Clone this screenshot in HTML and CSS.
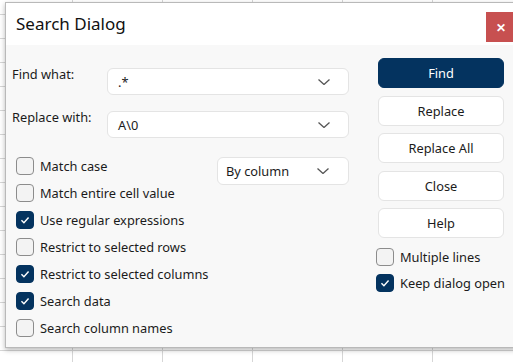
FILE: index.html
```html
<!DOCTYPE html>
<html>
<head>
<meta charset="utf-8">
<link rel="stylesheet" href="styles.css">
</head>
<body>
<div class="dialog">
  <div class="titlebar">
    <span class="title">Search Dialog</span>
    <span class="close">&#x2715;</span>
  </div>
  <div class="content">
    <div class="form">
      <div class="fields">
        <label class="field-label">Find what:</label>
        <div class="combo"><span>.*</span><svg class="chev" viewBox="0 0 12 6"><path d="M0.5 0.5 L6 5.5 L11.5 0.5"/></svg></div>
        <label class="field-label">Replace with:</label>
        <div class="combo"><span>A\0</span><svg class="chev" viewBox="0 0 12 6"><path d="M0.5 0.5 L6 5.5 L11.5 0.5"/></svg></div>
      </div>
      <div class="options">
        <div class="checks">
          <div class="check"><span class="box"></span>Match case</div>
          <div class="check"><span class="box"></span>Match entire cell value</div>
          <div class="check"><span class="box on"><svg viewBox="0 0 18 18"><path d="M5 9.2 L7.8 12 L13 6.2"/></svg></span>Use regular expressions</div>
          <div class="check"><span class="box"></span>Restrict to selected rows</div>
          <div class="check"><span class="box on"><svg viewBox="0 0 18 18"><path d="M5 9.2 L7.8 12 L13 6.2"/></svg></span>Restrict to selected columns</div>
          <div class="check"><span class="box on"><svg viewBox="0 0 18 18"><path d="M5 9.2 L7.8 12 L13 6.2"/></svg></span>Search data</div>
          <div class="check"><span class="box"></span>Search column names</div>
        </div>
        <div class="combo small"><span>By column</span><svg class="chev" viewBox="0 0 12 6"><path d="M0.5 0.5 L6 5.5 L11.5 0.5"/></svg></div>
      </div>
    </div>
    <div class="actions">
      <button class="btn primary">Find</button>
      <button class="btn">Replace</button>
      <button class="btn">Replace All</button>
      <button class="btn">Close</button>
      <button class="btn">Help</button>
      <div class="right-checks">
        <div class="check"><span class="box"></span>Multiple lines</div>
        <div class="check"><span class="box on"><svg viewBox="0 0 18 18"><path d="M5 9.2 L7.8 12 L13 6.2"/></svg></span>Keep dialog open</div>
      </div>
    </div>
  </div>
</div>
</body>
</html>
```
FILE: styles.css
```css
html, body {
  margin: 0;
  padding: 0;
}
body {
  width: 513px;
  height: 362px;
  overflow: hidden;
  background-color: #ffffff;
  background-image:
    linear-gradient(to right, #d6d6d6 1px, transparent 1px),
    linear-gradient(to bottom, #d6d6d6 1px, transparent 1px);
  background-size: 90px 24px;
  background-position: 72px 14px;
  font-family: "Noto Sans", "Open Sans", sans-serif;
  color: #1b1b1b;
}
.dialog {
  margin: 2px 0 0 5px;
  width: 520px;
  height: 346px;
  border: 1px solid #b9b9b9;
  background: #f8f8f8;
  box-shadow: 0 2px 5px rgba(0,0,0,0.28);
  box-sizing: border-box;
}
.titlebar {
  height: 42px;
  background: #ffffff;
  display: flex;
  align-items: flex-start;
  justify-content: space-between;
}
.title {
  font-size: 17px;
  margin: 10px 0 0 10px;
  line-height: 22px;
  color: #111;
}
.close {
  margin: 9px 8px 0 0;
  width: 30px;
  height: 30px;
  background: #c75050;
  color: #fff;
  font-size: 12px;
  font-weight: bold;
  display: flex;
  align-items: center;
  justify-content: center;
}
.content {
  display: flex;
  padding: 13px 0 0 6px;
  font-size: 12.8px;
}
.form {
  width: 338px;
  padding-top: 10px;
}
.fields {
  display: grid;
  grid-template-columns: 95px 242px;
  row-gap: 16px;
  align-items: start;
}
.field-label {
  line-height: 17px;
  margin-top: -2px;
}
.combo {
  height: 27px;
  box-sizing: border-box;
  background: #fff;
  border: 1.5px solid #e4e4e4;
  border-radius: 6px;
  display: flex;
  align-items: center;
  justify-content: space-between;
  padding: 0 18px 0 10px;
}
.chev {
  width: 12px;
  height: 6px;
  fill: none;
  stroke: #555;
  stroke-width: 1.3;
}
.options {
  display: flex;
  align-items: flex-start;
  margin-top: 19px;
}
.checks {
  display: flex;
  flex-direction: column;
  gap: 9px;
  width: 201px;
  margin-left: 4px;
}
.check {
  display: flex;
  align-items: center;
  height: 18px;
  gap: 6px;
  white-space: nowrap;
}
.box {
  width: 18px;
  height: 18px;
  box-sizing: border-box;
  border: 1.3px solid #8c8c8c;
  border-radius: 4px;
  background: #f3f3f3;
  flex: none;
}
.box.on {
  background: #04335f;
  border-color: #04335f;
}
.box svg {
  display: block;
  width: 16px;
  height: 16px;
  fill: none;
  stroke: #fff;
  stroke-width: 1.6;
}
.combo.small {
  width: 132px;
  height: 28px;
  margin-top: 0;
  padding: 0 19px 0 8px;
}
.actions {
  margin-left: 28px;
  width: 126px;
  display: flex;
  flex-direction: column;
  gap: 7.5px;
}
.btn {
  height: 30px;
  box-sizing: border-box;
  background: #fff;
  border: 1.5px solid #e4e4e4;
  border-radius: 6px;
  font-family: inherit;
  font-size: 12.8px;
  color: #1b1b1b;
  padding: 0;
}
.btn.primary {
  background: #04335f;
  border-color: #04335f;
  color: #fff;
}
.right-checks {
  margin: 2px 0 0 -2px;
  display: flex;
  flex-direction: column;
  gap: 8px;
}
```
